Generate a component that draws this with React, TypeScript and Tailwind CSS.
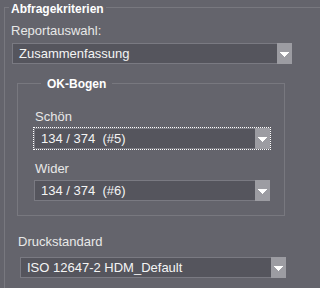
const FONT = "font-['Liberation_Sans',Arial,sans-serif]";

function Arrow() {
  return (
    <svg width="9" height="5" viewBox="0 0 9 5" shapeRendering="crispEdges" className="mt-[2px]">
      <polygon points="0,0 9,0 4.5,5" fill="#ffffff" />
    </svg>
  );
}

function Dropdown({ value, width, focused }: { value: string; width: string; focused?: boolean }) {
  return (
    <div className={`flex h-[21px] ${width} ${focused ? "outline outline-1 outline-dotted outline-white" : ""}`}>
      <div className="flex flex-1 items-center border-y border-l border-[#7a7a82] bg-[#55555d] pl-[6px] text-[13px] leading-[15px] text-[#f4f4f4] whitespace-pre">
        {value}
      </div>
      <div className="flex w-[15px] items-center justify-center bg-[#9c9ca2]">
        <Arrow />
      </div>
    </div>
  );
}

export default function App() {
  return (
    <div className={`h-screen min-h-[288px] w-full min-w-[296px] overflow-hidden bg-[#64646c] ${FONT}`}>
      <fieldset className="ml-[4px] h-[320px] w-[calc(100%-4px)] border border-r-0 border-[#78787f]">
        <legend className="ml-[4px] px-[2px] text-[12px] font-bold leading-[15px] text-white">
          <span className="relative top-[2px]">Abfragekriterien</span>
        </legend>
        <div className="pt-[8px] text-[13px] leading-[15px] text-[#e8e8e8]">
          <div className="ml-[6px]">Reportauswahl:</div>
          <div className="ml-[7px] mt-[5px]">
            <Dropdown value="Zusammenfassung" width="w-[280px]" />
          </div>

          <fieldset className="ml-[12px] mt-[12px] w-[268px] border border-[#78787f] pb-[14px] pl-[16px]">
            <legend className="ml-[7px] px-[6px] text-[12px] font-bold leading-[15px] text-white">
              <span className="relative top-[1px]">OK-Bogen</span>
            </legend>
            <div className="ml-[1px] mt-[18px]">Schön</div>
            <div className="mt-[4px]">
              <Dropdown value="134 / 374  (#5)" width="w-[236px]" focused />
            </div>
            <div className="ml-[1px] mt-[12px]">Wider</div>
            <div className="mt-[4px]">
              <Dropdown value="134 / 374  (#6)" width="w-[236px]" />
            </div>
          </fieldset>

          <div className="ml-[13px] mt-[18px]">Druckstandard</div>
          <div className="ml-[15px] mt-[8px]">
            <Dropdown value="ISO 12647-2 HDM_Default" width="w-[266px]" />
          </div>
        </div>
      </fieldset>
    </div>
  );
}
